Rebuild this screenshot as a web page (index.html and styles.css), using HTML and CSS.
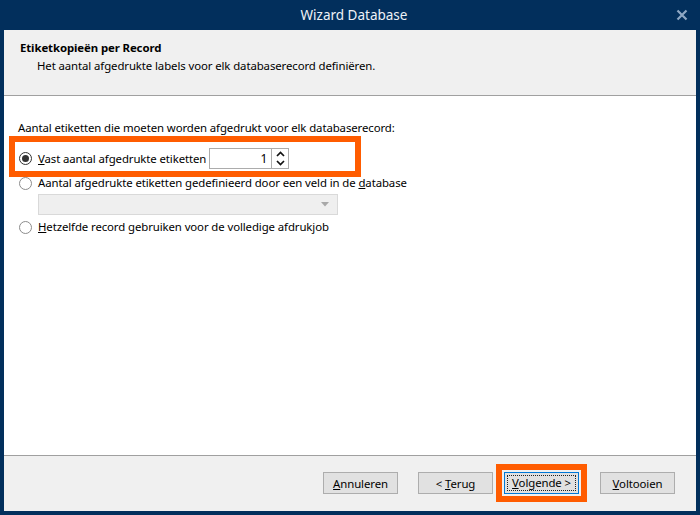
FILE: index.html
```html
<!DOCTYPE html>
<html lang="nl">
<head>
    <meta charset="UTF-8">
    <title>Wizard Database</title>
    <link rel="stylesheet" href="styles.css">
</head>
<body>
    <div class="window">
        <div class="titlebar">
            <span class="title">Wizard Database</span>
            <svg class="close" width="12" height="12" viewBox="0 0 12 12">
                <path d="M1.5 1.5 L10.5 10.5 M10.5 1.5 L1.5 10.5" stroke="#8ea7c3" stroke-width="2.2" fill="none"/>
            </svg>
        </div>

        <div class="header">
            <div class="header-title">Etiketkopieën per Record</div>
            <div class="header-sub">Het aantal afgedrukte labels voor elk databaserecord definiëren.</div>
        </div>

        <div class="content">
            <p class="prompt">Aantal etiketten die moeten worden afgedrukt voor elk databaserecord:</p>

            <div class="option option-first">
                <span class="radio checked"></span>
                <span class="label"><u>V</u>ast aantal afgedrukte etiketten</span>
                <div class="spinbox">
                    <span class="spin-value">1</span>
                    <span class="spin-arrows">
                        <svg width="9" height="6" viewBox="0 0 9 6"><path d="M1 5 L4.5 1.5 L8 5" stroke="#111" stroke-width="1.7" fill="none"/></svg>
                        <svg width="9" height="6" viewBox="0 0 9 6"><path d="M1 1 L4.5 4.5 L8 1" stroke="#111" stroke-width="1.7" fill="none"/></svg>
                    </span>
                </div>
                <span class="callout"></span>
            </div>

            <div class="option">
                <span class="radio"></span>
                <span class="label">Aantal afgedrukte etiketten gedefinieerd door een veld in de <u>d</u>atabase</span>
            </div>

            <div class="combo">
                <svg width="8" height="5" viewBox="0 0 8 5"><path d="M0 0 L8 0 L4 4.5 Z" fill="#a8a8a8"/></svg>
            </div>

            <div class="option">
                <span class="radio"></span>
                <span class="label"><u>H</u>etzelfde record gebruiken voor de volledige afdrukjob</span>
            </div>
        </div>

        <div class="footer">
            <button class="btn"><u>A</u>nnuleren</button>
            <button class="btn btn-back">&lt; <u>T</u>erug</button>
            <button class="btn btn-next"><span class="focus-ring"><u>V</u>olgende &gt;</span></button>
            <button class="btn btn-finish"><u>V</u>oltooien</button>
        </div>
    </div>
</body>
</html>
```

FILE: styles.css
```css
* {
    box-sizing: border-box;
}
body {
    margin: 0;
    font-family: 'Noto Sans', 'Open Sans', sans-serif;
    font-size: 11.4px;
    letter-spacing: -0.1px;
    color: #000;
}
.window {
    width: 700px;
    height: 515px;
    background-color: #022f5c;
    padding: 0 4px 4px 4px;
    display: flex;
    flex-direction: column;
}
.titlebar {
    height: 30px;
    flex: none;
    position: relative;
    display: flex;
    align-items: center;
    justify-content: center;
}
.title {
    color: #eef2f7;
    font-size: 13.5px;
    letter-spacing: 0;
    padding-left: 8px;
}
.close {
    position: absolute;
    right: 8px;
    top: 9px;
}
.header {
    height: 66px;
    flex: none;
    background-color: #f0f0f0;
    border-bottom: 1px solid #a0a0a0;
    padding: 10px 0 0 16px;
}
.header-title {
    font-weight: bold;
    line-height: 16px;
}
.header-sub {
    line-height: 16px;
    margin-top: 2px;
    padding-left: 17px;
}
.content {
    flex: 1;
    background-color: #fff;
    padding: 24px 0 0 15px;
    display: flex;
    flex-direction: column;
    align-items: flex-start;
}
.prompt {
    margin: 0 0 0 -1px;
    line-height: 16px;
}
.option {
    display: flex;
    align-items: center;
    height: 16px;
    margin-top: 6px;
}
.option-first {
    position: relative;
    height: 21px;
    margin-top: 12px;
}
.option:last-child {
    margin-top: 4px;
}
.radio {
    width: 13px;
    height: 13px;
    border: 1px solid #8c8c8c;
    border-radius: 50%;
    background-color: #fff;
    margin-right: 6px;
    flex: none;
    display: flex;
    align-items: center;
    justify-content: center;
}
.radio.checked {
    border-color: #333;
}
.radio.checked::after {
    content: "";
    width: 7px;
    height: 7px;
    border-radius: 50%;
    background-color: #333;
}
.label {
    line-height: 16px;
    white-space: nowrap;
}
.spinbox {
    margin-left: 3px;
    width: 80px;
    height: 21px;
    border: 1px solid #acacac;
    display: flex;
}
.spin-value {
    flex: 1;
    text-align: right;
    padding-right: 4px;
    line-height: 19px;
    font-size: 12px;
}
.spin-arrows {
    width: 17px;
    border-left: 1px solid #acacac;
    display: flex;
    flex-direction: column;
    align-items: center;
    justify-content: center;
    gap: 3px;
}
.callout {
    position: absolute;
    left: -10px;
    top: -12px;
    width: 352px;
    height: 41px;
    border: 6px solid #ff5c00;
    pointer-events: none;
}
.combo {
    margin: 3px 0 0 19px;
    width: 300px;
    height: 21px;
    background-color: #efefef;
    border: 1px solid #d9d9d9;
    display: flex;
    align-items: center;
    justify-content: flex-end;
    padding-right: 8px;
}
.footer {
    height: 56px;
    flex: none;
    background-color: #f0f0f0;
    border-top: 1px solid #a0a0a0;
    padding: 16px 21px 0 0;
    display: flex;
    justify-content: flex-end;
    align-items: flex-start;
}
.btn {
    width: 75px;
    height: 22px;
    background-color: #e1e1e1;
    border: 1px solid #adadad;
    font-family: inherit;
    font-size: 11.4px;
    letter-spacing: -0.1px;
    color: #000;
    padding: 0;
    margin-left: 20px;
}
.btn-back {
    margin-left: 20px;
}
.btn-next {
    margin-left: 11px;
    border-color: #0078d7;
    padding: 2px;
    outline: 6px solid #ff5c00;
    outline-offset: 2px;
}
.focus-ring {
    display: block;
    height: 100%;
    border: 1px dotted #222;
    line-height: 14px;
}
.btn-finish {
    margin-left: 21px;
}
```
